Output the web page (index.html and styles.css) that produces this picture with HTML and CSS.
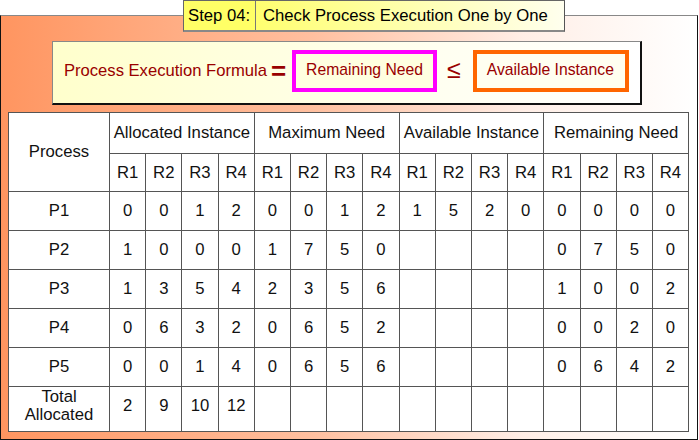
FILE: index.html
```html
<!DOCTYPE html>
<html>
<head>
<meta charset="utf-8">
<link rel="stylesheet" href="styles.css">
</head>
<body>
<div class="page">
  <div class="step">
    <div class="step-num">Step 04:</div>
    <div class="step-title">Check Process Execution One by One</div>
  </div>
  <div class="panel">
    <div class="formula">
      <span class="f-label">Process Execution Formula</span>
      <span class="f-eq">=</span>
      <span class="f-box f-pink">Remaining Need</span>
      <span class="f-le">≤</span>
      <span class="f-box f-orange">Available Instance</span>
    </div>
    <table class="grid">
      <colgroup>
        <col class="c-proc">
        <col><col><col><col><col><col><col><col>
        <col><col><col><col><col><col><col><col>
      </colgroup>
      <tr class="h1">
        <td rowspan="2">Process</td>
        <td colspan="4">Allocated Instance</td>
        <td colspan="4">Maximum Need</td>
        <td colspan="4">Available Instance</td>
        <td colspan="4">Remaining Need</td>
      </tr>
      <tr class="h2">
        <td>R1</td><td>R2</td><td>R3</td><td>R4</td>
        <td>R1</td><td>R2</td><td>R3</td><td>R4</td>
        <td>R1</td><td>R2</td><td>R3</td><td>R4</td>
        <td>R1</td><td>R2</td><td>R3</td><td>R4</td>
      </tr>
      <tr class="row">
        <td>P1</td>
        <td>0</td><td>0</td><td>1</td><td>2</td>
        <td>0</td><td>0</td><td>1</td><td>2</td>
        <td>1</td><td>5</td><td>2</td><td>0</td>
        <td>0</td><td>0</td><td>0</td><td>0</td>
      </tr>
      <tr class="row">
        <td>P2</td>
        <td>1</td><td>0</td><td>0</td><td>0</td>
        <td>1</td><td>7</td><td>5</td><td>0</td>
        <td></td><td></td><td></td><td></td>
        <td>0</td><td>7</td><td>5</td><td>0</td>
      </tr>
      <tr class="row">
        <td>P3</td>
        <td>1</td><td>3</td><td>5</td><td>4</td>
        <td>2</td><td>3</td><td>5</td><td>6</td>
        <td></td><td></td><td></td><td></td>
        <td>1</td><td>0</td><td>0</td><td>2</td>
      </tr>
      <tr class="row">
        <td>P4</td>
        <td>0</td><td>6</td><td>3</td><td>2</td>
        <td>0</td><td>6</td><td>5</td><td>2</td>
        <td></td><td></td><td></td><td></td>
        <td>0</td><td>0</td><td>2</td><td>0</td>
      </tr>
      <tr class="row">
        <td>P5</td>
        <td>0</td><td>0</td><td>1</td><td>4</td>
        <td>0</td><td>6</td><td>5</td><td>6</td>
        <td></td><td></td><td></td><td></td>
        <td>0</td><td>6</td><td>4</td><td>2</td>
      </tr>
      <tr class="total">
        <td class="t-label">Total<br>Allocated</td>
        <td>2</td><td>9</td><td>10</td><td>12</td>
        <td></td><td></td><td></td><td></td>
        <td></td><td></td><td></td><td></td>
        <td></td><td></td><td></td><td></td>
      </tr>
    </table>
  </div>
</div>
</body>
</html>
```

FILE: styles.css
```css
* { box-sizing: border-box; }
html, body {
  margin: 0;
  padding: 0;
  background: #ffffff;
  font-family: "Liberation Sans", Arial, sans-serif;
}
.page {
  width: 699px;
  height: 440px;
  display: flex;
  flex-direction: column;
}
.step {
  position: relative;
  z-index: 2;
  display: flex;
  margin-left: 183px;
  width: 382px;
  height: 32px;
  margin-bottom: -17px;
  border: 1px solid #666;
  border-right-color: #555;
  border-bottom: 2px solid #888;
  font-size: 16.7px;
  color: #000;
}
.step-num {
  width: 72px;
  background: #ffff66;
  border-right: 1px solid #777;
  padding: 5px 0 0 4px;
}
.step-title {
  flex: 1;
  background: linear-gradient(to right, #ffff70, #ffffee);
  padding: 5px 0 0 7px;
}
.panel {
  flex: 1;
  width: 698px;
  border-top: 1px solid #888;
  border-left: 1px solid #111;
  border-right: 1px solid #111;
  border-bottom: 1px solid #111;
  background: linear-gradient(to right, #ff9560 0%, #ffc0a0 45%, #ffeee6 75%, #ffffff 100%);
  padding: 25px 0 0 7px;
  display: flex;
  flex-direction: column;
}
.formula {
  margin-left: 44px;
  width: 590px;
  height: 64px;
  border-top: 1px solid #888;
  border-left: 1px solid #888;
  border-right: 2px solid #111;
  border-bottom: 2px solid #111;
  background: linear-gradient(to right, #ffffcc, #ffffee 60%, #ffffff);
  display: flex;
  align-items: center;
  padding-left: 11px;
  color: #990000;
  font-size: 16.6px;
}
.f-label { margin-right: 4px; margin-top: -3px; }
.f-eq {
  font-size: 26px;
  font-weight: bold;
  line-height: 1;
  margin-right: 6px;
  margin-top: -4px;
}
.f-box {
  height: 42px;
  display: flex;
  align-items: center;
  padding: 0 0 2px 10px;
  font-size: 15.7px;
  margin-top: -3px;
}
.f-pink {
  width: 145px;
  border: 4px solid #ff00ff;
  background: #ffffe0;
}
.f-le {
  font-size: 25px;
  margin: -6px 12px 0 10px;
}
.f-orange {
  width: 156px;
  border: 4px solid #ff6600;
  background: #fffff0;
  padding-left: 10px;
}
.grid {
  margin-top: 7px;
  width: 681px;
  border-collapse: collapse;
  table-layout: fixed;
  background: #ffffff;
  font-size: 16.7px;
  color: #111;
}
.grid col { width: 36.2px; }
.grid col.c-proc { width: 101px; }
.grid td {
  border: 1px solid #555;
  text-align: center;
  vertical-align: middle;
  padding: 0;
  white-space: nowrap;
}
.h1 td { height: 41px; }
.h2 td { height: 38px; }
.row td { height: 39px; }
.total td { height: 45px; line-height: 18px; padding-bottom: 6px; }
```
